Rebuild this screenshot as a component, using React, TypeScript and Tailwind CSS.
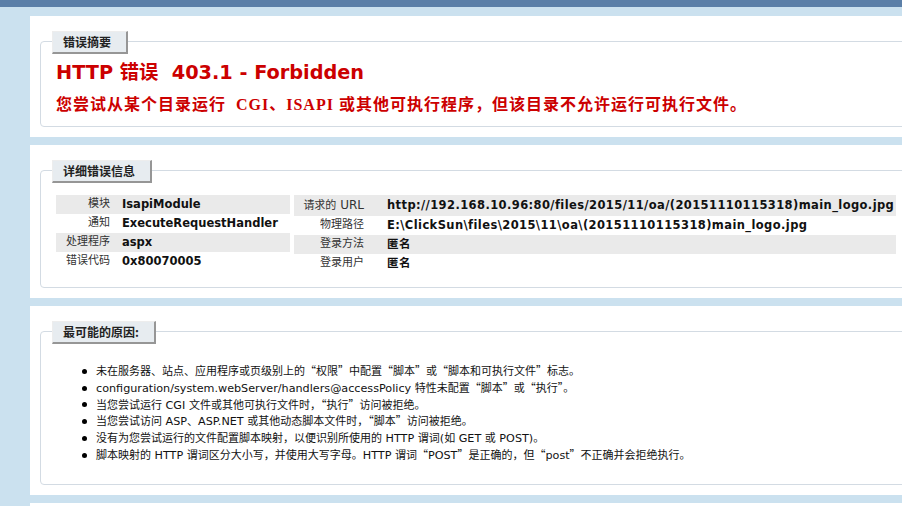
import React from "react";

const CJK = /([\u2018-\u201f\u3000-\u303f\u3400-\u9fff\uff00-\uffef]+)/;

function Runs({ text, cjk, latin }: { text: string; cjk: string; latin: string }) {
  const parts = text.split(CJK).filter((p) => p.length > 0);
  return (
    <>
      {parts.map((p, i) => (
        <span key={i} className={CJK.test(p) ? cjk : latin}>
          {p}
        </span>
      ))}
    </>
  );
}

const Legend = ({ children }: { children: React.ReactNode }) => (
  <div className="-mt-[11px] -ml-[4px] flex h-[23px] w-fit items-center border-t border-l border-t-[#ededed] border-l-[#ededed] border-r-2 border-b-2 border-r-[#969696] border-b-[#969696] bg-[#e7ecf0] pl-[10px] pr-[15px] font-['Noto_Sans_CJK_SC',sans-serif] text-[12px] font-bold text-[#222]">
    {children}
  </div>
);

const leftRows: [string, string][] = [
  ["模块", "IsapiModule"],
  ["通知", "ExecuteRequestHandler"],
  ["处理程序", "aspx"],
  ["错误代码", "0x80070005"],
];

const rightRows: [string, string][] = [
  ["请求的 URL", "http://192.168.10.96:80/files/2015/11/oa/(20151110115318)main_logo.jpg"],
  ["物理路径", "E:\\ClickSun\\files\\2015\\11\\oa\\(20151110115318)main_logo.jpg"],
  ["登录方法", "匿名"],
  ["登录用户", "匿名"],
];

const causes = [
  "未在服务器、站点、应用程序或页级别上的“权限”中配置“脚本”或“脚本和可执行文件”标志。",
  "configuration/system.webServer/handlers@accessPolicy 特性未配置“脚本”或“执行”。",
  "当您尝试运行 CGI 文件或其他可执行文件时，“执行”访问被拒绝。",
  "当您尝试访问 ASP、ASP.NET 或其他动态脚本文件时，“脚本”访问被拒绝。",
  "没有为您尝试运行的文件配置脚本映射，以便识别所使用的 HTTP 谓词(如 GET 或 POST)。",
  "脚本映射的 HTTP 谓词区分大小写，并使用大写字母。HTTP 谓词“POST”是正确的，但“post”不正确并会拒绝执行。",
];

export default function App() {
  return (
    <div className="h-[506px] w-[902px] overflow-hidden bg-[#cbe1ef] font-['DejaVu_Sans','Noto_Sans_CJK_SC',sans-serif] text-black">
      <div className="h-[7px] bg-[#5b7fa8]" />
      <div className="flex flex-col gap-[8px] pl-[30px] pt-[9px]">
        {/* Summary */}
        <div className="w-[1000px] bg-white p-[10px]">
          <div className="mt-[15px] rounded-[4px] border border-[#d3dbe3] px-[15px] pb-[12px]">
            <Legend>错误摘要</Legend>
            <div className="mt-[7px] text-[19.3px] font-bold leading-[24px] text-[#cc0000]">
              HTTP 错误&nbsp; 403.1 - Forbidden
            </div>
            <div className="mt-[10px] font-['Liberation_Serif','Noto_Sans_CJK_SC',serif] text-[16px] font-bold leading-[19px] tracking-[1px] text-[#cc0000]">
              您尝试从某个目录运行&nbsp; CGI、ISAPI 或其他可执行程序，但该目录不允许运行可执行文件。
            </div>
          </div>
        </div>

        {/* Details */}
        <div className="w-[1000px] bg-white p-[10px]">
          <div className="mt-[15px] rounded-[4px] border border-[#d3dbe3] px-[15px] pb-[14px]">
            <Legend>详细错误信息</Legend>
            <div className="mt-[12px] flex gap-[4px]">
              <div className="flex w-[234px] flex-col">
                {leftRows.map(([k, v], i) => (
                  <div
                    key={k}
                    className={`flex h-[19px] items-center ${i % 2 === 0 ? "bg-[#eaeaea]" : ""}`}
                  >
                    <div className="w-[60px] pr-[6px] text-right text-[11px] text-[#333]">{k}</div>
                    <div className="pl-[6px] text-[11.5px] font-bold text-[#111]">{v}</div>
                  </div>
                ))}
              </div>
              <div className="flex w-[602px] flex-col">
                {rightRows.map(([k, v], i) => (
                  <div
                    key={k}
                    className={`flex items-center ${i === 0 ? "h-[21px]" : "h-[19px]"} ${i % 2 === 0 ? "bg-[#eaeaea]" : ""}`}
                  >
                    <div className="w-[76px] shrink-0 pr-[6px] text-right text-[11px] text-[#333]">
                      <Runs text={k} cjk="" latin="text-[12px]" />
                    </div>
                    <div className="whitespace-nowrap pl-[17px] text-[11.5px] font-bold tracking-[0.4px] text-[#111]">{v}</div>
                  </div>
                ))}
              </div>
            </div>
          </div>
        </div>

        {/* Causes */}
        <div className="w-[1000px] bg-white p-[10px]">
          <div className="mt-[15px] rounded-[4px] border border-[#d3dbe3] px-[15px] pb-[20px]">
            <Legend>最可能的原因:</Legend>
            <ul className="mt-[19px] pl-[40px] text-[11px] leading-[14.8px] text-[#111]">
              {causes.map((c) => (
                <li key={c} className="flex items-center whitespace-nowrap">
                  <span className="-ml-[14px] mr-[9px] h-[5px] w-[5px] shrink-0 rounded-full bg-black" />
                  <span>
                    <Runs
                      text={c}
                      cjk="font-['Noto_Sans_CJK_SC',sans-serif] text-[11px]"
                      latin="text-[11.2px]"
                    />
                  </span>
                </li>
              ))}
            </ul>
          </div>
        </div>

        <div className="h-[100px] w-[1000px] bg-white" />
      </div>
    </div>
  );
}
